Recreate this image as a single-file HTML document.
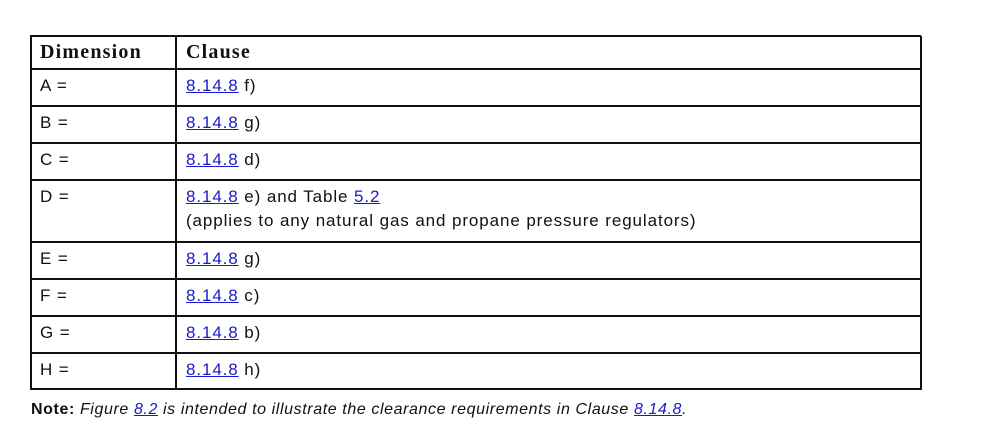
<!DOCTYPE html>
<html><head><style>
body{margin:0;width:992px;height:432px;background:#fff;position:relative;overflow:hidden;font-family:"Liberation Sans",sans-serif;color:#111}
.h{position:absolute;left:30px;width:891px;height:2px;background:#111}
.v{position:absolute;top:36px;height:354px;width:1.5px;background:#111}
.t{position:absolute;font-size:17px;white-space:nowrap;letter-spacing:0.9px}
.b{font-family:"Liberation Serif",serif;font-weight:bold;font-size:20px;letter-spacing:1.2px}
a{color:#1a1acc;text-decoration:underline}
</style></head><body>
<div class="h" style="top:35px"></div>
<div class="h" style="top:68px"></div>
<div class="h" style="top:105px"></div>
<div class="h" style="top:142px"></div>
<div class="h" style="top:179px"></div>
<div class="h" style="top:241px"></div>
<div class="h" style="top:278px"></div>
<div class="h" style="top:315px"></div>
<div class="h" style="top:352px"></div>
<div class="h" style="top:388px"></div>
<div class="v" style="left:30px"></div>
<div class="v" style="left:175px"></div>
<div class="v" style="left:920px"></div>
<div class="t b" style="left:40px;top:41px">Dimension</div>
<div class="t b" style="left:186px;top:41px">Clause</div>
<div class="t" style="left:40px;top:76px">A =</div><div class="t" style="left:186px;top:76px"><a>8.14.8</a> f)</div>
<div class="t" style="left:40px;top:113px">B =</div><div class="t" style="left:186px;top:113px"><a>8.14.8</a> g)</div>
<div class="t" style="left:40px;top:150px">C =</div><div class="t" style="left:186px;top:150px"><a>8.14.8</a> d)</div>
<div class="t" style="left:40px;top:187px">D =</div><div class="t" style="left:186px;top:187px"><a>8.14.8</a> e) and Table <a>5.2</a></div>
<div class="t" style="left:186px;top:211px">(applies to any natural gas and propane pressure regulators)</div>
<div class="t" style="left:40px;top:249px">E =</div><div class="t" style="left:186px;top:249px"><a>8.14.8</a> g)</div>
<div class="t" style="left:40px;top:286px">F =</div><div class="t" style="left:186px;top:286px"><a>8.14.8</a> c)</div>
<div class="t" style="left:40px;top:323px">G =</div><div class="t" style="left:186px;top:323px"><a>8.14.8</a> b)</div>
<div class="t" style="left:40px;top:360px">H =</div><div class="t" style="left:186px;top:360px"><a>8.14.8</a> h)</div>
<div class="t" style="left:31px;top:401px;font-size:16px;letter-spacing:0.6px"><b>Note:</b> <i>Figure <a>8.2</a> is intended to illustrate the clearance requirements in Clause <a>8.14.8</a>.</i></div>
</body></html>
